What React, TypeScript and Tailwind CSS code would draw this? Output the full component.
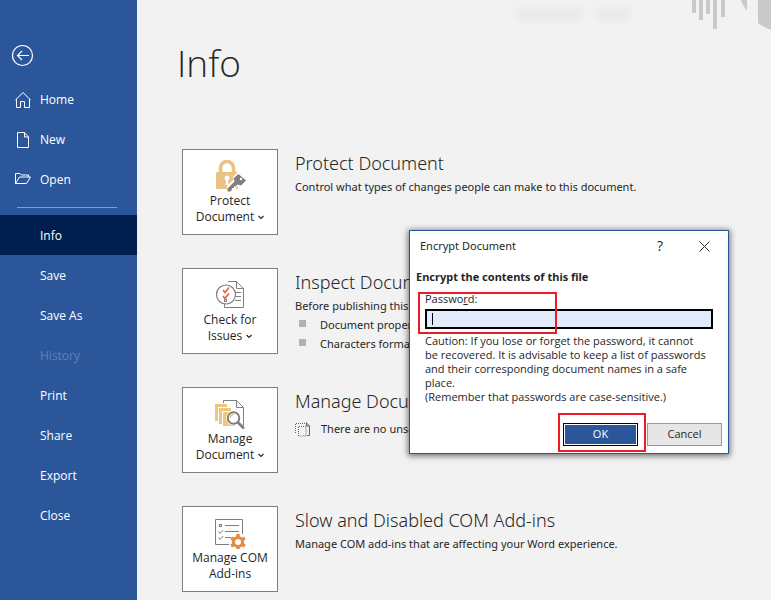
import React, { useState } from 'react';

interface NavItem {
  label: string;
  icon?: React.ReactNode;
  disabled?: boolean;
}

interface InfoSection {
  title: string;
  button: [string, string];
  hasMenu?: boolean;
  icon: React.ReactNode;
  body: React.ReactNode;
}

const HomeIcon = () => (
  <svg width="16" height="16" viewBox="0 0 16 16" fill="none" stroke="currentColor">
    <path d="M.5 7.800 8 .6l7.500 7.200M1.500 7v8.500h4v-6h4v6h5V7" />
  </svg>
);

const NewIcon = () => (
  <svg width="16" height="16" viewBox="0 0 16 16" fill="none" stroke="currentColor">
    <path d="M2.500.5h7l4 4.500v10.500h-11zM9.500.5V5h4" />
  </svg>
);

const OpenIcon = () => (
  <svg width="16" height="16" viewBox="0 0 16 16" fill="none" stroke="currentColor">
    <path d="M.5 11.500v-10h4.500l1.500 1.500h7v2M.5 11.500l4-6.500h11l-4 6.500z" />
  </svg>
);

const LockIcon = () => (
  <svg width="32" height="32" viewBox="0 0 32 32">
    <path d="M6.500 13V8a6.500 6.500 0 0 1 13 0v5" fill="none" stroke="#eac282" strokeWidth="3.600" />
    <rect x="2" y="12" width="22" height="17" rx="1.500" fill="#eac282" />
    <path d="M13 15.500a2.500 2.500 0 0 1 1.200 4.700V25h-2.400v-4.800A2.500 2.500 0 0 1 13 15.500z" fill="#fff" />
    <path d="m24.500 12 8 7.500-5.500 7.500-3.500-1-5 5.500h-5.500v-5.500l6.500-6.500-.5-3z" fill="#fff" />
    <path d="m24.500 14 7.500 6.500-5 5-3.500-1-2 2-1.500-.2v1.700h-2l-.2 2-1.300 1.500h-3v-3l7-7-.7-3.500z" fill="#808080" />
    <circle cx="27" cy="19" r="1.200" fill="#fff" />
  </svg>
);

const InspectIcon = () => (
  <svg width="32" height="32" viewBox="0 0 32 32" fill="none" stroke="#7f7f7f">
    <path d="M14 2.500h8.500l7 7v19H10.500V23" />
    <path d="M22.500 2.500v7h7M22 13.500h5M22 17.500h5M21 21.500h6" />
    <circle cx="12" cy="15.500" r="9.500" fill="#fff" strokeWidth="1.200" />
    <path d="m9 11 2 2.500 4-5M9 17l2 2.500 4-5" stroke="#e8694a" strokeWidth="1.800" />
    <rect x="10.500" y="20.500" width="2" height="2" />
  </svg>
);

const VersionsIcon = () => (
  <svg width="32" height="32" viewBox="0 0 32 32" fill="none">
    <path d="M9.500 5V2.500h13l7 7v18H27M22.500 2.500v7h7" stroke="#7f7f7f" />
    <path d="M1 6h12v3H4v14H1z" fill="#eec67e" />
    <path d="M5 10h12v3H8v13H5z" fill="#eec67e" />
    <path d="M9 14h12v14H9z" fill="#eec67e" />
    <path d="M4.500 23V9.500H13M8.500 26V13.500H17" stroke="#fff" />
    <circle cx="19.500" cy="20" r="7.500" fill="#fff" />
    <circle cx="19.500" cy="20" r="5.800" fill="#fff" stroke="#7f7f7f" strokeWidth="2" />
    <path d="m23.500 24 6.500 6.500" stroke="#7f7f7f" strokeWidth="2.600" />
    <path d="M16 20a3.500 3.500 0 0 1 3.500-3.500" stroke="#c9a35f" />
  </svg>
);

const AddInsIcon = () => (
  <svg width="32" height="32" viewBox="0 0 32 32" fill="none" stroke="#7f7f7f">
    <path d="M15 27.500H1.500v-25h27V17" />
    <rect x="5.500" y="7.500" width="2" height="2" />
    <path d="M11 8.500h14M11 14.500h14M11 20.500h6M4.500 14.500l1.700 2 3-3.500M4.500 20.500l1.700 2 3-3.500" />
    <g stroke="#e08a45">
      <circle cx="24" cy="25" r="4.500" strokeWidth="3" />
      <path
        d="M24 17v3M24 30v3M17.100 21l2.600 1.500M28.300 27.500l2.600 1.500M17.100 29l2.600-1.500M28.300 22.500l2.600-1.500"
        strokeWidth="3.400"
      />
    </g>
  </svg>
);

const DraftIcon = () => (
  <svg width="16" height="15" viewBox="0 0 16 15" fill="none" stroke="#666">
    <path d="M.5 11V1.500H11M3.500 14V4.500H11v9.500H3.500" strokeDasharray="1 1" />
    <path d="M11 .5l3.500 3.500v9.500H12M11.500.5V4h3" />
  </svg>
);

const ChevronIcon = () => (
  <svg width="6" height="5" viewBox="0 0 6 5" fill="none" stroke="#262626" className="ml-1 inline-block align-middle">
    <path d="m.5 1 2.500 2.500L5.500 1" strokeWidth="1.200" />
  </svg>
);

const topItems: NavItem[] = [
  { label: 'Home', icon: <HomeIcon /> },
  { label: 'New', icon: <NewIcon /> },
  { label: 'Open', icon: <OpenIcon /> },
];

const bottomItems: NavItem[] = [
  { label: 'Info' },
  { label: 'Save' },
  { label: 'Save As' },
  { label: 'History', disabled: true },
  { label: 'Print' },
  { label: 'Share' },
  { label: 'Export' },
  { label: 'Close' },
];

const sections: InfoSection[] = [
  {
    title: 'Protect Document',
    button: ['Protect', 'Document'],
    hasMenu: true,
    icon: <LockIcon />,
    body: <p>Control what types of changes people can make to this document.</p>,
  },
  {
    title: 'Inspect Document',
    button: ['Check for', 'Issues'],
    hasMenu: true,
    icon: <InspectIcon />,
    body: (
      <>
        <p>Before publishing this file, be aware that it contains:</p>
        <ul>
          {["Document properties and author's name", 'Characters formatted as hidden text'].map((text) => (
            <li key={text} className="flex h-[19px] items-center gap-[14px] pl-1">
              <span className="mb-[2px] size-[7px] bg-[#b1b1b1]" />
              {text}
            </li>
          ))}
        </ul>
      </>
    ),
  },
  {
    title: 'Manage Document',
    button: ['Manage', 'Document'],
    hasMenu: true,
    icon: <VersionsIcon />,
    body: (
      <p className="flex items-center gap-[10px] pt-1">
        <DraftIcon />
        There are no unsaved changes.
      </p>
    ),
  },
  {
    title: 'Slow and Disabled COM Add-ins',
    button: ['Manage COM', 'Add-ins'],
    icon: <AddInsIcon />,
    body: <p>Manage COM add-ins that are affecting your Word experience.</p>,
  },
];

function NavButton({ item, active, onSelect }: { item: NavItem; active: boolean; onSelect: (label: string) => void }) {
  return (
    <button
      type="button"
      disabled={item.disabled}
      onClick={() => onSelect(item.label)}
      className={`flex h-10 w-full items-center pl-[15px] text-left ${item.icon ? '' : 'pt-[2px]'} ${
        active ? 'bg-[#001f4e]' : 'enabled:hover:bg-[#1e4b8f]'
      } ${item.disabled ? 'text-[#5f80b5]' : 'text-white'}`}
    >
      <span className="mr-[9px] size-4">{item.icon}</span>
      {item.label}
    </button>
  );
}

function Sidebar() {
  const [selected, setSelected] = useState('Info');

  return (
    <nav className="w-[137px] shrink-0 bg-[#2b579a] pt-[44px] text-xs">
      <button type="button" aria-label="Back" className="mb-[13px] ml-[11px] block text-white">
        <svg width="23" height="23" viewBox="0 0 23 23" fill="none" stroke="currentColor">
          <circle cx="11.500" cy="11.500" r="10" strokeWidth="1.200" />
          <path d="M18 11.500H6.500M11 7l-4.500 4.500L11 16" strokeWidth="1.200" />
        </svg>
      </button>
      {topItems.map((item) => (
        <NavButton key={item.label} item={item} active={selected === item.label} onSelect={setSelected} />
      ))}
      <hr className="mt-[7px] mr-5 mb-[7px] ml-[17px] border-[#7ba0d4]" />
      {bottomItems.map((item) => (
        <NavButton key={item.label} item={item} active={selected === item.label} onSelect={setSelected} />
      ))}
    </nav>
  );
}

function SectionRow({ section }: { section: InfoSection }) {
  const [first, second] = section.button;

  return (
    <section className="flex gap-[17px]">
      <button
        type="button"
        className="flex h-[86px] w-24 shrink-0 flex-col items-center border border-[#7f7f7f] bg-white pt-[10px] text-xs leading-4 font-medium hover:bg-[#f5f5f5]"
      >
        {section.icon}
        <span className="mt-px">{first}</span>
        <span className="whitespace-nowrap">
          {second}
          {section.hasMenu && <ChevronIcon />}
        </span>
      </button>
      <div className="min-w-0 font-['Noto_Sans',sans-serif] text-[11px] leading-[18px] whitespace-nowrap">
        <h2 className="mb-px text-lg leading-7 font-light text-[#262626]">{section.title}</h2>
        {section.body}
      </div>
    </section>
  );
}

function EncryptDialog() {
  const [password, setPassword] = useState('');

  return (
    <div
      role="dialog"
      aria-labelledby="encrypt-title"
      className="absolute top-[230px] left-[409px] w-80 border border-[#2b579a] bg-white pb-[7px] text-[11px] shadow-[0_1px_6px_1px_rgba(0,0,0,0.55)]"
    >
      <div className="flex h-[30px] items-center pr-[18px] pl-[10px]">
        <h3 id="encrypt-title" className="flex-1 font-['Noto_Sans',sans-serif] text-[11px]">
          Encrypt Document
        </h3>
        <button type="button" aria-label="Help" className="mr-9 text-sm">
          ?
        </button>
        <button type="button" aria-label="Close dialog">
          <svg width="11" height="11" viewBox="0 0 11 11" stroke="#262626">
            <path d="m.5.5 10 10M10.500.5l-10 10" />
          </svg>
        </button>
      </div>
      <p className="mt-2 pl-[6px] font-['Noto_Sans',sans-serif] leading-4 font-bold">Encrypt the contents of this file</p>
      <div className="relative mt-[6px] px-[15px]">
        <label htmlFor="password" className="block leading-4">
          Passwo<u>r</u>d:
        </label>
        <input
          id="password"
          type="password"
          value={password}
          onChange={(e) => setPassword(e.target.value)}
          className="mt-[2px] block h-5 w-full border-2 border-black bg-[#e1ebfb] px-[6px] caret-transparent outline-none"
        />
        {password === '' && <span className="absolute bottom-1 left-[22px] h-3 w-px bg-black" />}
        <span className="pointer-events-none absolute top-px -bottom-[5px] left-2 w-[139px] border-2 border-[#ed1c24]" />
      </div>
      <p className="mt-[5px] pr-[15px] pl-[15px] leading-[14px]">
        Caution: If you lose or forget the password, it cannot
        <br />
        be recovered. It is advisable to keep a list of passwords
        <br />
        and their corresponding document names in a safe
        <br />
        place.
        <br />
        (Remember that passwords are case-sensitive.)
      </p>
      <div className="mt-[19px] flex justify-end gap-[9px] pr-[6px]">
        <div className="relative">
          <button
            type="button"
            className="block h-[23px] w-[75px] border border-black bg-[#2b579a] text-white shadow-[inset_0_0_0_1px_#fff]"
          >
            OK
          </button>
          <span className="pointer-events-none absolute -top-[10px] -right-2 -bottom-[6px] -left-[5px] border-2 border-[#ed1c24]" />
        </div>
        <button type="button" className="h-[23px] w-[75px] border border-[#999] bg-[#e6e6e6]">
          Cancel
        </button>
      </div>
    </div>
  );
}

export default function App() {
  return (
    <div className="relative flex min-h-screen bg-[#f2f2f2] font-['Open_Sans',sans-serif] text-[#262626]">
      <Sidebar />
      <main className="min-w-0 flex-1 overflow-hidden pb-2 pl-[45px]">
        <h1 className="-ml-[5px] pt-[39px] text-[37px] leading-[48px] font-light">Info</h1>
        <div className="mt-[62px] flex flex-col gap-[33px]">
          {sections.map((section) => (
            <SectionRow key={section.title} section={section} />
          ))}
        </div>
      </main>
      <div className="absolute top-0 right-0 flex">
        <div className="mt-2 mr-[62px] flex gap-4 blur-[3px]">
          <span className="h-3 w-16 bg-[#e9e9e9]" />
          <span className="h-3 w-8 bg-[#e9e9e9]" />
        </div>
        <svg width="80" height="32" viewBox="0 0 80 32" fill="#c9c9c9">
          <path d="M1 0h4v13H1zM8 0h4v20H8zM15 0h4v14h-4zM22 0h4v29h-4zM30 0h4v17h-4z" />
          <path d="M50 0h6v11q-4-5-6-11zM67 0h13v30q-8-3-13-7z" />
        </svg>
      </div>
      <EncryptDialog />
    </div>
  );
}
